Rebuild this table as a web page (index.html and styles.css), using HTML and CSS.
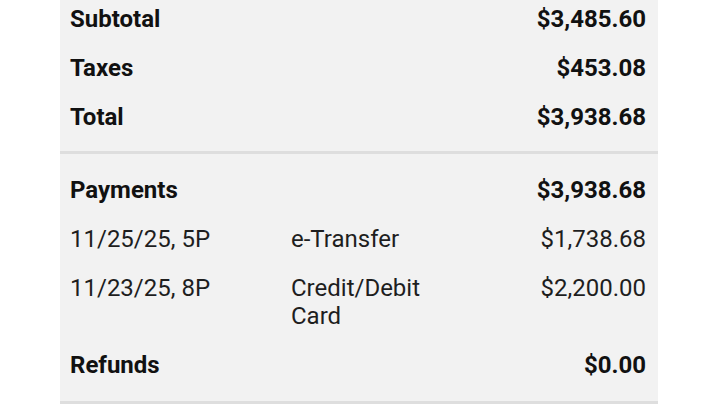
FILE: index.html
```html
<!DOCTYPE html>
<html>
<head>
<meta charset="utf-8">
<link rel="stylesheet" href="styles.css">
</head>
<body>
<div class="panel">
  <section class="group">
    <div class="row bold"><span class="label">Subtotal</span><span class="amount">$3,485.60</span></div>
    <div class="row bold"><span class="label">Taxes</span><span class="amount">$453.08</span></div>
    <div class="row bold"><span class="label">Total</span><span class="amount">$3,938.68</span></div>
  </section>
  <section class="group">
    <div class="row bold"><span class="label">Payments</span><span class="amount">$3,938.68</span></div>
    <div class="row"><span class="date">11/25/25, 5P</span><span class="method">e-Transfer</span><span class="amount">$1,738.68</span></div>
    <div class="row"><span class="date">11/23/25, 8P</span><span class="method">Credit/Debit Card</span><span class="amount">$2,200.00</span></div>
    <div class="row bold"><span class="label">Refunds</span><span class="amount">$0.00</span></div>
  </section>
</div>
</body>
</html>
```
FILE: styles.css
```css
html, body {
  margin: 0;
  padding: 0;
  background: #ffffff;
}
body {
  font-family: Roboto, "Liberation Sans", sans-serif;
  font-size: 24px;
  line-height: 28px;
  color: #1e1e1e;
}
.panel {
  width: 598px;
  margin: -5px 0 0 60px;
  background: #f2f2f2;
}
.group {
  padding: 0 12px 0 10px;
  border-bottom: 3px solid #dedede;
}
.group + .group {
  padding-top: 12px;
}
.group:first-child {
  padding-bottom: 9px;
}
.group:last-child {
  padding-bottom: 11px;
}
.row {
  display: grid;
  grid-template-columns: 221px 152px 1fr;
  padding: 10px 0 11px;
}
.row.bold {
  font-weight: 700;
  color: #111111;
}
.label {
  grid-column: 1 / 3;
}
.amount {
  grid-column: 3;
  text-align: right;
}
```
